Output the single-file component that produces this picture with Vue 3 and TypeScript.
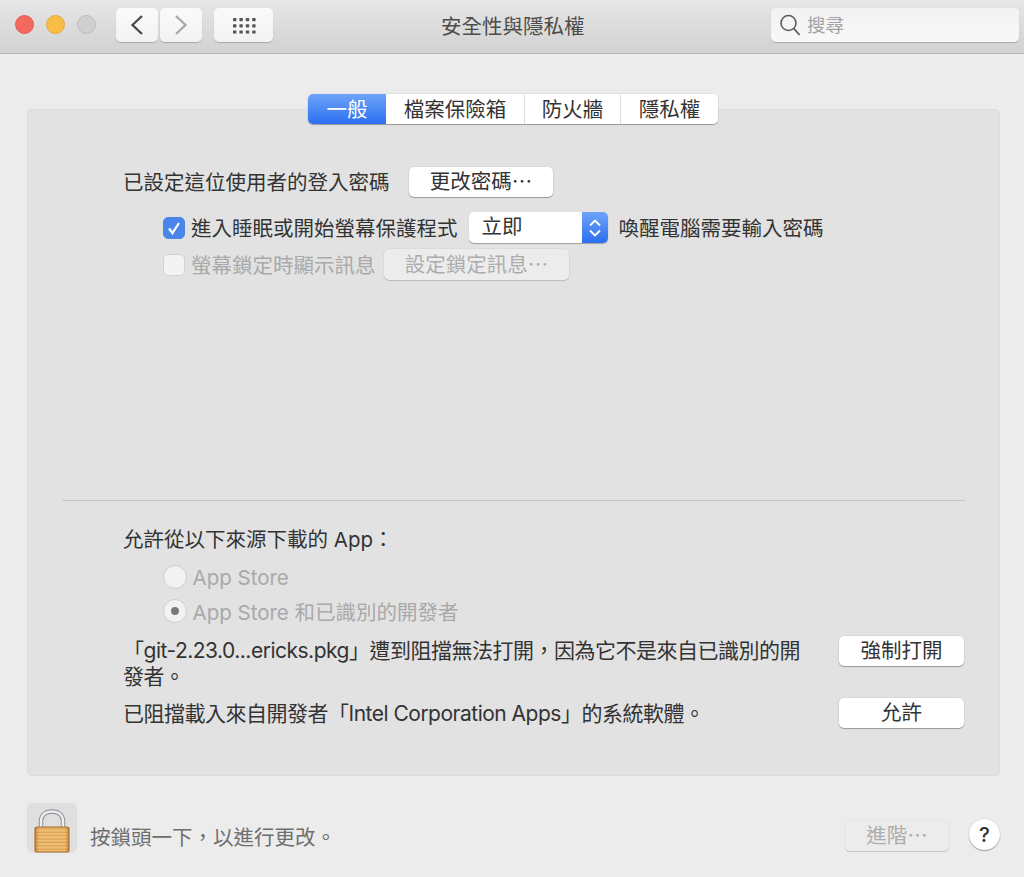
<script setup lang="ts">
const tabs = [
  { label: '一般', w: 78, active: true },
  { label: '檔案保險箱', w: 139, active: false },
  { label: '防火牆', w: 96, active: false },
  { label: '隱私權', w: 97, active: false },
]
</script>

<template>
  <div class="win" lang="zh-TW">
    <header class="toolbar">
      <div class="lights">
        <span class="light red"></span>
        <span class="light yellow"></span>
        <span class="light grey"></span>
      </div>
      <div class="nav">
        <button class="tb back" type="button">
          <svg width="16" height="22" viewBox="0 0 16 22"><path d="M13 2 3.5 11 13 20" fill="none" stroke="#4a4a4a" stroke-width="2.3" /></svg>
        </button>
        <button class="tb fwd" type="button">
          <svg width="16" height="22" viewBox="0 0 16 22"><path d="M3 2 12.5 11 3 20" fill="none" stroke="#a8a8a8" stroke-width="2.3" /></svg>
        </button>
      </div>
      <button class="tb grid" type="button">
        <svg width="24" height="17" viewBox="0 0 24 17" fill="#555">
          <template v-for="r in 3" :key="r">
            <rect v-for="c in 4" :key="c" :x="(c - 1) * 6.4 + 1" :y="(r - 1) * 6.2 + 1" width="3.4" height="3.2" rx=".6" />
          </template>
        </svg>
      </button>
      <h1 class="title">安全性與隱私權</h1>
      <div class="search">
        <svg width="22" height="24" viewBox="0 0 22 24"><circle cx="9.5" cy="10" r="7.5" fill="none" stroke="#5c5c5c" stroke-width="1.6" /><path d="M15 15.6 20.5 22" stroke="#5c5c5c" stroke-width="1.7" fill="none" /></svg>
        <span class="stxt">搜尋</span>
      </div>
    </header>

    <main class="body">
      <section class="panel">
        <nav class="tabs">
          <button
            v-for="t in tabs"
            :key="t.label"
            type="button"
            class="tab"
            :class="{ active: t.active }"
            :style="{ width: t.w + 'px' }"
          >{{ t.label }}</button>
        </nav>

        <div class="top">
          <div class="row r1">
            <span class="tx">已設定這位使用者的登入密碼</span>
            <button class="btn pw" type="button">更改密碼⋯</button>
          </div>
          <div class="row r2">
            <span class="check on">
              <svg width="16" height="16" viewBox="0 0 16 16"><path d="M3 8.5 6.5 13 13 3" fill="none" stroke="#fff" stroke-width="2.2" /></svg>
            </span>
            <span class="cl tx">進入睡眠或開始螢幕保護程式</span>
            <div class="select">
              <span class="sv">立即</span>
              <span class="arrows">
                <svg width="14" height="22" viewBox="0 0 14 22"><path d="M2 8.5 7 3.5 12 8.5M2 13.5 7 18.5 12 13.5" fill="none" stroke="#fff" stroke-width="1.9" /></svg>
              </span>
            </div>
            <span class="after tx">喚醒電腦需要輸入密碼</span>
          </div>
          <div class="row r3 off">
            <span class="check"></span>
            <span class="cl tx">螢幕鎖定時顯示訊息</span>
            <button class="btn dis msg" type="button">設定鎖定訊息⋯</button>
          </div>
        </div>

        <hr class="rule" />

        <div class="bottom">
          <p class="allow">允許從以下來源下載的 App：</p>
          <div class="radio off r-a"><span class="dot"></span><span>App Store</span></div>
          <div class="radio off r-b"><span class="dot sel"></span><span>App Store 和已識別的開發者</span></div>
          <div class="msgrow m1">
            <p>「git-2.23.0...ericks.pkg」遭到阻擋無法打開，因為它不是來自已識別的開發者。</p>
            <button class="btn act" type="button">強制打開</button>
          </div>
          <div class="msgrow m2">
            <p>已阻擋載入來自開發者「Intel Corporation Apps」的系統軟體。</p>
            <button class="btn act" type="button">允許</button>
          </div>
        </div>
      </section>

      <footer class="foot">
        <div class="lockbox">
          <svg width="36" height="44" viewBox="0 0 36 44">
            <defs>
              <pattern id="st" width="4" height="3.4" patternUnits="userSpaceOnUse">
                <rect width="4" height="3.4" fill="#efbd74" />
                <rect y="2.3" width="4" height="1.1" fill="#d9a052" />
              </pattern>
              <linearGradient id="edge" x1="0" x2="1" y1="0" y2="0">
                <stop offset="0" stop-color="#a5651f" stop-opacity=".55" />
                <stop offset=".12" stop-color="#a5651f" stop-opacity="0" />
                <stop offset=".88" stop-color="#a5651f" stop-opacity="0" />
                <stop offset="1" stop-color="#a5651f" stop-opacity=".55" />
              </linearGradient>
            </defs>
            <path d="M7 20V12.5C7 6 11.5 2.5 18 2.5S29 6 29 12.5V20" fill="none" stroke="#85888e" stroke-width="4.4" />
            <path d="M7 20V12.5C7 6 11.5 2.5 18 2.5S29 6 29 12.5V20" fill="none" stroke="#eeeef0" stroke-width="2.6" />
            <rect x="1" y="18" width="34" height="25" rx="2" fill="url(#st)" />
            <rect x="1" y="18" width="34" height="25" rx="2" fill="url(#edge)" stroke="#a8692a" stroke-width="1.1" />
          </svg>
        </div>
        <span class="locktxt">按鎖頭一下，以進行更改。</span>
        <button class="btn adv" type="button">進階⋯</button>
        <button class="help" type="button">?</button>
      </footer>
    </main>
  </div>
</template>

<style>
html, body { margin: 0; background: #ececec; }
</style>

<style scoped>
.win {
  width: 1024px;
  height: 877px;
  overflow: hidden;
  background: #ececec;
  font-family: Inter, "Noto Sans CJK TC", sans-serif;
  font-size: 20.5px;
  color: #333;
  display: flex;
  flex-direction: column;
}
button { font: inherit; color: inherit; padding: 0; margin: 0; border: 0; }
p { margin: 0; }

.toolbar {
  height: 53px;
  flex: none;
  display: flex;
  align-items: flex-start;
  background: linear-gradient(#e6e6e6, #d2d2d2);
  border-bottom: 1px solid #b5b5b5;
  position: relative;
}
.lights { display: flex; gap: 12px; margin: 15px 0 0 15px; }
.light { width: 19px; height: 19px; border-radius: 50%; box-sizing: border-box; }
.red { background: #f26a5f; border: 1px solid #e25a50; }
.yellow { background: #f8bd45; border: 1px solid #e4a93a; }
.grey { background: #d0d0d0; border: 1px solid #bdbdbd; }
.nav { display: flex; gap: 2px; margin: 8px 0 0 20px; }
.tb {
  height: 34px;
  width: 42px;
  border-radius: 5px;
  background: linear-gradient(#fafafa, #f2f2f2);
  box-shadow: 0 1px 1px rgba(0, 0, 0, .22);
  display: flex;
  align-items: center;
  justify-content: center;
}
.tb.grid { width: 59px; margin: 8px 0 0 12px; }
.title {
  margin: 14px 0 0 168px;
  font-size: 20.5px;
  font-weight: 400;
  line-height: 26px;
  color: #4c4c4c;
}
.search {
  position: absolute;
  left: 771px;
  top: 8px;
  width: 248px;
  height: 34px;
  box-sizing: border-box;
  border-radius: 5px;
  background: linear-gradient(#f2f2f2, #f8f8f8);
  box-shadow: 0 1px 1px rgba(0, 0, 0, .22);
  display: flex;
  align-items: center;
  gap: 6px;
  padding-left: 8px;
  color: #a3a3a3;
  font-size: 18.5px;
}
.stxt { padding-bottom: 2px; }

.body { flex: 1; display: flex; flex-direction: column; padding: 55px 24px 0 27px; }
.panel {
  position: relative;
  height: 667px;
  flex: none;
  box-sizing: border-box;
  background: #e2e2e2;
  border-radius: 5px;
  box-shadow: inset 0 0 0 1px #dcdcdc;
  display: flex;
  flex-direction: column;
}
.tabs {
  position: absolute;
  left: 281px;
  top: -15px;
  display: flex;
  height: 30px;
  border-radius: 5px;
  background: #fff;
  box-shadow: 0 1px 1px rgba(0, 0, 0, .3), 0 0 0 .5px rgba(0, 0, 0, .08);
}
.tab {
  height: 30px;
  line-height: 32px;
  background: #fff;
  border-right: 1px solid #dedede;
  box-sizing: border-box;
  text-align: center;
}
.tab:first-child { border-radius: 5px 0 0 5px; border-right: 0; }
.tab:last-child { border-radius: 0 5px 5px 0; border-right: 0; }
.tab.active { background: linear-gradient(#6ea4f8, #2a6ff0); color: #fff; }

.top { padding: 58px 0 0 96px; height: 333px; box-sizing: border-box; flex: none; }
.row { display: flex; align-items: center; }
.tx { padding-bottom: 2px; }
.r1 { height: 30px; }
.r2 { height: 31px; margin: 15px 0 0 40px; }
.r3 { height: 31px; margin: 6px 0 0 40px; }
.btn {
  height: 30px;
  line-height: 30px;
  background: #fff;
  border-radius: 5px;
  box-shadow: 0 1px 1px rgba(0, 0, 0, .3), 0 0 0 .5px rgba(0, 0, 0, .08);
  text-align: center;
}
.pw { width: 144px; margin-left: 19.5px; }
.check {
  width: 22px;
  height: 22px;
  flex: none;
  box-sizing: border-box;
  border-radius: 5px;
  background: #f3f3f3;
  border: 1px solid #d2d2d2;
  display: flex;
  align-items: center;
  justify-content: center;
}
.check.on { background: #4a86ea; border-color: #4a86ea; }
.cl { margin-left: 6px; }
.select {
  width: 139px;
  height: 31px;
  margin-left: 11px;
  border-radius: 5px;
  background: #fff;
  box-shadow: 0 1px 1px rgba(0, 0, 0, .3);
  display: flex;
  justify-content: space-between;
  overflow: hidden;
}
.sv { margin-left: 13px; line-height: 29px; }
.arrows {
  width: 26px;
  background: linear-gradient(#6ea4f8, #2a6ff0);
  display: flex;
  align-items: center;
  justify-content: center;
}
.after { margin-left: 11px; }
.off { color: #a9a9a9; }
.dis {
  background: #ececec;
  color: #adadad;
  box-shadow: 0 1px 1px rgba(0, 0, 0, .14), 0 0 0 .5px rgba(0, 0, 0, .06);
}
.msg { width: 185px; margin-left: 8.5px; height: 31px; line-height: 31px; }

.rule {
  margin: 58px 35px 0 35px;
  border: 0;
  height: 1px;
  flex: none;
  background: #c6c6c6;
}
.bottom { padding: 0 36px 0 96px; }
.allow { margin-top: 25px; line-height: 28px; }
.radio { display: flex; align-items: center; gap: 5.5px; height: 24px; margin-left: 40px; }
.r-a { margin-top: 11px; }
.r-b { margin-top: 10px; }
.dot {
  width: 24px;
  height: 24px;
  box-sizing: border-box;
  border-radius: 50%;
  background: #f2f2f2;
  border: 1px solid #cdcdcd;
  display: flex;
  align-items: center;
  justify-content: center;
  flex: none;
}
.dot.sel::after { content: ""; width: 8px; height: 8px; border-radius: 50%; background: #7a7a7a; }
.msgrow { display: flex; justify-content: space-between; align-items: flex-start; }
.msgrow p { width: 690px; line-height: 26px; font-size: 21px; letter-spacing: -.5px; }
.m1 { margin-top: 13px; }
.m1 p { margin-top: 2px; }
.m2 { margin-top: 8px; }
.m2 p { margin-top: 3px; }
.act { width: 125px; flex: none; }

.foot { display: flex; align-items: flex-start; height: 74px; margin-top: 27px; }
.lockbox {
  width: 50px;
  height: 50px;
  background: #dfdfdf;
  border-radius: 5px;
  display: flex;
  justify-content: center;
  align-items: flex-end;
  box-sizing: border-box;
}
.locktxt { margin: 21px 0 0 13px; line-height: 28px; color: #6e6e6e; }
.adv { width: 104px; margin: 18px 0 0 auto; background: #ececec; color: #adadad; box-shadow: 0 1px 1px rgba(0,0,0,.14), 0 0 0 .5px rgba(0,0,0,.06); }
.help {
  width: 31px;
  height: 31px;
  margin: 16px 0 0 20px;
  border-radius: 50%;
  background: #fff;
  box-shadow: 0 1px 1px rgba(0, 0, 0, .3), 0 0 0 .5px rgba(0, 0, 0, .1);
  font-weight: 500;
  line-height: 31px;
  text-align: center;
}
</style>
